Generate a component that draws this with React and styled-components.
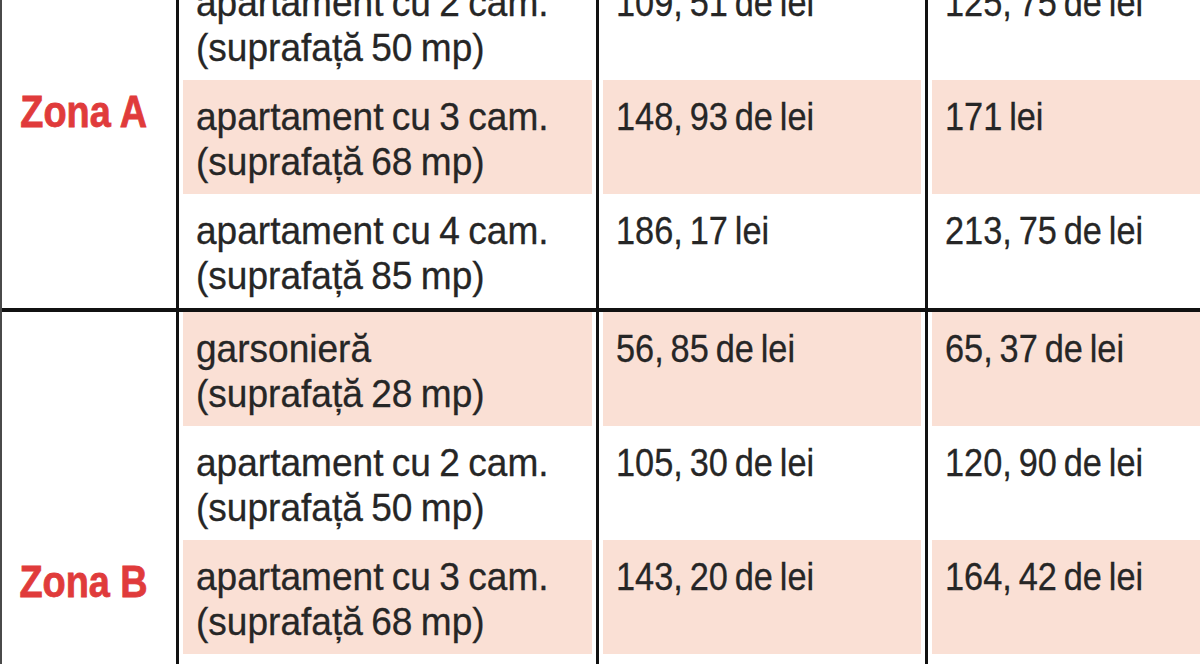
import React from "react";
import styled, { createGlobalStyle } from "styled-components";

const GlobalStyle = createGlobalStyle`
  html, body {
    margin: 0;
    padding: 0;
    background: #ffffff;
  }
  body {
    font-family: "Liberation Sans", Arial, sans-serif;
  }
`;

const Viewport = styled.main`
  width: 1200px;
  height: 664px;
  overflow: hidden;
  background: #ffffff;
`;

const Table = styled.div`
  margin-top: -34px;
  width: 1240px;
  border-left: 2px solid #4a4a4a;
`;

const Zone = styled.section`
  display: grid;
  grid-template-columns: 177px 420px 329px 312px;
  grid-auto-rows: 114px;
  border-bottom: ${(p) => (p.$last ? "none" : "4px solid #111111")};
`;

const Label = styled.div`
  grid-column: 1;
  grid-row: span ${(p) => p.$rows};
  box-sizing: border-box;
  border-right: 3px solid #111111;
  padding-top: ${(p) => p.$offset}px;
  padding-right: 10px;
  text-align: center;
  background: #ffffff;
`;

const LabelText = styled.span`
  display: inline-block;
  font-family: "Liberation Sans", Arial, sans-serif;
  font-weight: 700;
  font-size: 44px;
  line-height: 44px;
  color: #e03b3b;
  -webkit-text-stroke: 0.8px #e03b3b;
  transform: scaleX(0.86);
  white-space: nowrap;
`;

const Cell = styled.div`
  box-sizing: border-box;
  border-right: ${(p) => (p.$edge ? "3px solid #111111" : "none")};
  background: ${(p) => (p.$shade ? "#fae0d5" : "#ffffff")};
  box-shadow: inset 4px 0 0 #ffffff, inset -4px 0 0 #ffffff;
  padding: 14px 0 0 17px;
  overflow: hidden;
`;

const Text = styled.div`
  font-size: 39px;
  line-height: 45px;
  color: #262626;
  -webkit-text-stroke: 0.3px #262626;
  white-space: nowrap;
  transform: scaleX(${(p) => p.$squeeze});
  transform-origin: left top;
  word-spacing: ${(p) => p.$gap}px;
`;

const Line = styled.span`
  display: block;
`;

const zones = [
  {
    name: "Zona A",
    offset: 124,
    rows: [
      {
        type: ["apartament cu 2 cam.", "(suprafață 50 mp)"],
        a: "109, 51 de lei",
        b: "125, 75 de lei",
        shade: false,
      },
      {
        type: ["apartament cu 3 cam.", "(suprafață 68 mp)"],
        a: "148, 93 de lei",
        b: "171 lei",
        shade: true,
      },
      {
        type: ["apartament cu 4 cam.", "(suprafață 85 mp)"],
        a: "186, 17 lei",
        b: "213, 75 de lei",
        shade: false,
      },
    ],
  },
  {
    name: "Zona B",
    offset: 248,
    last: true,
    rows: [
      {
        type: ["garsonieră", "(suprafață 28 mp)"],
        a: "56, 85 de lei",
        b: "65, 37 de lei",
        shade: true,
      },
      {
        type: ["apartament cu 2 cam.", "(suprafață 50 mp)"],
        a: "105, 30 de lei",
        b: "120, 90 de lei",
        shade: false,
      },
      {
        type: ["apartament cu 3 cam.", "(suprafață 68 mp)"],
        a: "143, 20 de lei",
        b: "164, 42 de lei",
        shade: true,
      },
      {
        type: [],
        a: "",
        b: "",
        shade: false,
      },
    ],
  },
];

export default function App() {
  return (
    <>
      <GlobalStyle />
      <Viewport>
        <Table>
          {zones.map((zone) => (
            <Zone key={zone.name} $last={zone.last}>
              <Label $rows={zone.rows.length} $offset={zone.offset}>
                <LabelText>{zone.name}</LabelText>
              </Label>
              {zone.rows.map((row, i) => (
                <React.Fragment key={i}>
                  <Cell $edge $shade={row.shade}>
                    <Text $squeeze={0.95} $gap={-2}>
                      {row.type.map((t) => (
                        <Line key={t}>{t}</Line>
                      ))}
                    </Text>
                  </Cell>
                  <Cell $edge $shade={row.shade}>
                    <Text $squeeze={0.88} $gap={-3}>
                      {row.a}
                    </Text>
                  </Cell>
                  <Cell $shade={row.shade}>
                    <Text $squeeze={0.88} $gap={-3}>
                      {row.b}
                    </Text>
                  </Cell>
                </React.Fragment>
              ))}
            </Zone>
          ))}
        </Table>
      </Viewport>
    </>
  );
}
